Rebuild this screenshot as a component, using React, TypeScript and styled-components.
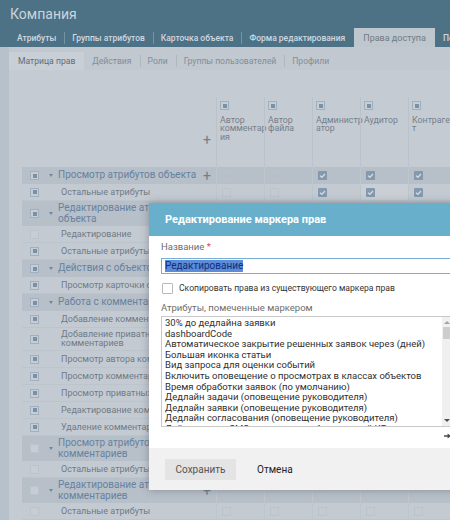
import React from 'react';
import styled, { createGlobalStyle, css } from 'styled-components';

type Box = 'on' | 'off';
type Mark = 'mixed' | 'empty';

type MatrixRow = {
  kind: 'group' | 'item';
  title: string;
  mark: Mark;
  cells: Box[];
  tall?: boolean;
  lit?: number;
};

const GlobalStyle = createGlobalStyle`
  html, body {
    margin: 0;
    padding: 0;
  }
  body {
    font-family: Roboto, 'Liberation Sans', sans-serif;
    overflow: hidden;
  }
`;

const tabs = ['Атрибуты', 'Группы атрибутов', 'Карточка объекта', 'Форма редактирования', 'Права доступа', 'Поведение'];
const subTabs = ['Матрица прав', 'Действия', 'Роли', 'Группы пользователей', 'Профили'];
const columns = ['Автор\nкомментар\nия', 'Автор\nфайла', 'Администр\nатор', 'Аудитор', 'Контраген\nт'];

const ON: Box[] = ['off', 'off', 'on', 'on', 'on'];
const MIX: Box[] = ['on', 'off', 'on', 'on', 'off'];
const OFF: Box[] = ['off', 'off', 'off', 'off', 'off'];

const rows: MatrixRow[] = [
  { kind: 'group', title: 'Просмотр атрибутов объекта', mark: 'mixed', cells: ON },
  { kind: 'item', title: 'Остальные атрибуты', mark: 'mixed', cells: ON, lit: 3 },
  { kind: 'group', title: 'Редактирование атрибутов\nобъекта', mark: 'mixed', cells: ON, tall: true },
  { kind: 'item', title: 'Редактирование', mark: 'empty', cells: OFF },
  { kind: 'item', title: 'Остальные атрибуты', mark: 'mixed', cells: ON },
  { kind: 'group', title: 'Действия с объектом', mark: 'mixed', cells: ON },
  { kind: 'item', title: 'Просмотр карточки объекта', mark: 'mixed', cells: ON },
  { kind: 'group', title: 'Работа с комментариями', mark: 'mixed', cells: MIX },
  { kind: 'item', title: 'Добавление комментариев', mark: 'mixed', cells: MIX },
  { kind: 'item', title: 'Добавление приватных\nкомментариев', mark: 'mixed', cells: MIX, tall: true },
  { kind: 'item', title: 'Просмотр автора комментария', mark: 'mixed', cells: MIX },
  { kind: 'item', title: 'Просмотр комментариев', mark: 'mixed', cells: MIX },
  { kind: 'item', title: 'Просмотр приватных комментариев', mark: 'mixed', cells: MIX },
  { kind: 'item', title: 'Редактирование комментариев', mark: 'mixed', cells: MIX },
  { kind: 'item', title: 'Удаление комментариев', mark: 'mixed', cells: MIX },
  { kind: 'group', title: 'Просмотр атрибутов\nкомментариев', mark: 'empty', cells: OFF, tall: true },
  { kind: 'item', title: 'Остальные атрибуты', mark: 'empty', cells: OFF },
  { kind: 'group', title: 'Редактирование атрибутов\nкомментариев', mark: 'empty', cells: OFF, tall: true },
  { kind: 'item', title: 'Остальные атрибуты', mark: 'empty', cells: OFF },
];

const attributes = [
  '30% до дедлайна заявки',
  'dashboardCode',
  'Автоматическое закрытие решенных заявок через (дней)',
  'Большая иконка статьи',
  'Вид запроса для оценки событий',
  'Включить оповещение о просмотрах в классах объектов',
  'Время обработки заявок (по умолчанию)',
  'Дедлайн задачи (оповещение руководителя)',
  'Дедлайн заявки (оповещение руководителя)',
  'Дедлайн согласования (оповещение руководителя)',
  'Действие для SMS-оповещения об изменений КЕ',
];

export default function App(): JSX.Element {
  return (
    <>
      <GlobalStyle />
      <Page>
        <Header>
          <Title>Компания</Title>
          <TabBar>
            {tabs.map((t, i) => (
              <Tab key={t} active={i === 4} sep={i > 0 && i < 4}>
                {t}
              </Tab>
            ))}
          </TabBar>
        </Header>

        <Body>
          <Strip />
          <Main>
            <SubBar>
              {subTabs.map((t, i) => (
                <SubTab key={t} active={i === 0} sep={i > 1}>
                  {t}
                </SubTab>
              ))}
            </SubBar>

            <Matrix>
              <HeadRow>
                <HeadName>
                  <Plus>+</Plus>
                </HeadName>
                {columns.map((c) => (
                  <HeadCell key={c}>
                    <MarkBox mark="mixed" />
                    <HeadLabel>{c}</HeadLabel>
                  </HeadCell>
                ))}
              </HeadRow>

              {rows.map((r, i) => (
                <Row key={i} kind={r.kind} tall={r.tall}>
                  <NameCell>
                    <MarkBox mark={r.mark} />
                    {r.kind === 'group' && <Caret />}
                    <Name kind={r.kind}>{r.title}</Name>
                    {r.kind === 'group' && <RowPlus>+</RowPlus>}
                  </NameCell>
                  {r.cells.map((c, j) => (
                    <Cell key={j} lit={r.lit === j}>
                      <CheckBox on={c === 'on'}>
                        {c === 'on' && (
                          <svg width="9" height="9" viewBox="0 0 9 9">
                            <path d="M2 4.6 L3.8 6.3 L7 3" fill="none" stroke="#dde3e8" strokeWidth="1.2" />
                          </svg>
                        )}
                      </CheckBox>
                    </Cell>
                  ))}
                </Row>
              ))}
            </Matrix>
          </Main>
        </Body>

        <Backdrop />

        <Dialog>
          <DialogHead>Редактирование маркера прав</DialogHead>
          <DialogBody>
            <FieldLabel>
              Название <Req>*</Req>
            </FieldLabel>
            <Input>
              <Selected>Редактирование</Selected>
            </Input>
            <CheckRow>
              <PlainBox />
              <span>Скопировать права из существующего маркера прав</span>
            </CheckRow>
            <FieldLabel gap>Атрибуты, помеченные маркером</FieldLabel>
            <ListBox>
              <ListItems>
                {attributes.map((a) => (
                  <ListItem key={a}>{a}</ListItem>
                ))}
              </ListItems>
              <ScrollBar>
                <ScrollArrow up />
                <Thumb />
                <ScrollArrow />
              </ScrollBar>
            </ListBox>
            <MoveRow>
              <svg width="7" height="6" viewBox="0 0 7 6">
                <path d="M0 2.2 H3.6 V0.4 L6.8 3 L3.6 5.6 V3.8 H0 Z" fill="#4a4a4a" />
              </svg>
            </MoveRow>
          </DialogBody>
          <DialogFoot>
            <SaveButton>Сохранить</SaveButton>
            <CancelButton>Отмена</CancelButton>
          </DialogFoot>
        </Dialog>
      </Page>
    </>
  );
}

const Page = styled.div`
  position: relative;
  width: 450px;
  height: 520px;
  overflow: hidden;
  background: #c7ced5;
`;

const Header = styled.header`
  height: 47px;
  background: #4a7185;
  display: flex;
  flex-direction: column;
  justify-content: space-between;
`;

const Title = styled.div`
  padding: 6px 0 0 10px;
  font-size: 14px;
  line-height: 16px;
  color: #cdd7de;
`;

const TabBar = styled.nav`
  display: flex;
  height: 19px;
  padding-left: 9px;
`;

const Tab = styled.div<{ active?: boolean; sep?: boolean }>`
  position: relative;
  display: flex;
  align-items: center;
  padding: 0 8px;
  font-size: 8.5px;
  font-weight: 500;
  color: #d2dbe1;
  white-space: nowrap;
  ${({ sep }) =>
    sep &&
    css`
      &::before {
        content: '';
        position: absolute;
        left: 0;
        top: 4px;
        width: 1px;
        height: 12px;
        background: #7593a4;
      }
    `}
  ${({ active }) =>
    active &&
    css`
      padding: 0 9px;
      margin-left: 1px;
      background: #c0c8d0;
      color: #6f7b85;
      font-weight: 400;
      font-size: 9px;
    `}
`;

const Body = styled.div`
  display: flex;
  height: 473px;
`;

const Strip = styled.div`
  width: 9px;
  flex-shrink: 0;
  background: #b8c3cd;
`;

const Main = styled.main`
  flex: 1;
  min-width: 0;
  overflow: hidden;
`;

const SubBar = styled.div`
  display: flex;
  padding-top: 5px;
  background: #c3cad1;
`;

const SubTab = styled.div<{ active?: boolean; sep?: boolean }>`
  position: relative;
  height: 18px;
  display: flex;
  align-items: center;
  padding: 0 8px;
  font-size: 8.6px;
  color: #818f9a;
  white-space: nowrap;
  ${({ sep }) =>
    sep &&
    css`
      &::before {
        content: '';
        position: absolute;
        left: 0;
        top: 3px;
        width: 1px;
        height: 12px;
        background: #b0b9c2;
      }
    `}
  ${({ active }) =>
    active &&
    css`
      padding: 0 9px;
      background: #cbd2d8;
      color: #5f6c76;
    `}
`;

const Matrix = styled.div`
  width: 434px;
  margin-left: 13px;
  padding-top: 27px;
`;

const HeadRow = styled.div`
  display: flex;
  height: 70px;
`;

const HeadName = styled.div`
  width: 194px;
  display: flex;
  justify-content: flex-end;
  align-items: center;
  padding: 16px 5px 0 0;
  box-sizing: border-box;
`;

const Plus = styled.span`
  font-size: 14px;
  line-height: 14px;
  color: #6f7f8d;
`;

const HeadCell = styled.div`
  width: 48px;
  box-sizing: border-box;
  border-left: 1px solid #bcc4cc;
  padding: 4px 0 0 3px;
  display: flex;
  flex-direction: column;
  align-items: flex-start;
`;

const HeadLabel = styled.div`
  margin-top: 6px;
  font-size: 8.8px;
  line-height: 8.4px;
  color: #737f8a;
  white-space: pre;
`;

const MarkBox = styled.span<{ mark: Mark }>`
  position: relative;
  display: block;
  flex-shrink: 0;
  width: 9px;
  height: 9px;
  box-sizing: border-box;
  border: 1px solid ${({ mark }) => (mark === 'mixed' ? '#a1b1c1' : '#bdc5cd')};
  background: #c9d0d7;
  ${({ mark }) =>
    mark === 'mixed' &&
    css`
      &::after {
        content: '';
        position: absolute;
        left: 1.5px;
        top: 1.5px;
        width: 4px;
        height: 4px;
        background: #7990a6;
      }
    `}
`;

const Row = styled.div<{ kind: 'group' | 'item'; tall?: boolean }>`
  display: flex;
  height: ${({ tall, kind }) => (tall ? (kind === 'group' ? '25px' : '23px') : '17px')};
  background: ${({ kind }) => (kind === 'group' ? '#b9c1c9' : '#c6cdd4')};
  border-bottom: ${({ kind }) => (kind === 'item' ? '1px solid #bfc7ce' : 'none')};
  box-sizing: border-box;
`;

const NameCell = styled.div`
  width: 194px;
  flex-shrink: 0;
  display: flex;
  align-items: center;
  padding: 0 5px 0 8px;
  box-sizing: border-box;
`;

const Caret = styled.span`
  width: 0;
  height: 0;
  margin-left: 10px;
  border-left: 2.5px solid transparent;
  border-right: 2.5px solid transparent;
  border-top: 3px solid #6e89a0;
  flex-shrink: 0;
`;

const Name = styled.span<{ kind: 'group' | 'item' }>`
  flex: 0 1 auto;
  min-width: 0;
  white-space: pre;
  overflow: hidden;
  ${({ kind }) =>
    kind === 'group'
      ? css`
          margin-left: 5px;
          font-size: 10px;
          line-height: 10.5px;
          color: #6582a0;
        `
      : css`
          margin-left: 22px;
          font-size: 9px;
          line-height: 9px;
          color: #6e7a84;
        `}
`;

const RowPlus = styled.span`
  margin-left: auto;
  padding-left: 4px;
  font-size: 14px;
  line-height: 12px;
  color: #6f7f8d;
`;

const Cell = styled.div<{ lit?: boolean }>`
  width: 48px;
  flex-shrink: 0;
  box-sizing: border-box;
  border-left: 1px solid #bfc7cf;
  display: flex;
  align-items: center;
  padding-left: 5px;
  ${({ lit }) => lit && 'background: #ccd2d8;'}
`;

const CheckBox = styled.span<{ on?: boolean }>`
  width: 9px;
  height: 9px;
  box-sizing: border-box;
  border-radius: 1px;
  display: flex;
  ${({ on }) => (on ? 'background: #8299ae;' : 'border: 1px solid #bcc4cc;')}
  svg {
    display: block;
  }
`;

const Backdrop = styled.div`
  position: absolute;
  inset: 0;
  background: rgba(150, 160, 170, 0.04);
`;

const Dialog = styled.section`
  position: absolute;
  left: 149px;
  top: 203px;
  width: 316px;
  background: #fff;
  box-shadow: 0 0 8px rgba(40, 50, 60, 0.35);
`;

const DialogHead = styled.div`
  height: 33px;
  display: flex;
  align-items: center;
  padding-left: 16px;
  background: #67afcb;
  color: #fff;
  font-size: 11px;
  font-weight: 700;
`;

const DialogBody = styled.div`
  padding: 6px 12px 3px 12px;
`;

const FieldLabel = styled.div<{ gap?: boolean }>`
  font-size: 9.5px;
  line-height: 10px;
  color: #6d6d6d;
  margin-top: ${({ gap }) => (gap ? '9px' : '0')};
`;

const Req = styled.span`
  color: #e0483f;
`;

const Input = styled.div`
  margin-top: 6px;
  height: 16px;
  box-sizing: border-box;
  border: 1px solid #7aaed6;
  display: flex;
  align-items: center;
  padding-left: 3px;
  font-size: 10px;
`;

const Selected = styled.span`
  background: #5b8bd9;
  color: #122e78;
  line-height: 12px;
`;

const CheckRow = styled.label`
  margin-top: 8px;
  height: 12px;
  display: flex;
  align-items: center;
  gap: 6px;
  font-size: 8.6px;
  color: #333;
`;

const PlainBox = styled.span`
  width: 11px;
  height: 11px;
  box-sizing: border-box;
  border: 1px solid #b9b9b9;
  border-radius: 1px;
  margin-left: 1px;
`;

const ListBox = styled.div`
  margin-top: 3px;
  height: 111px;
  box-sizing: border-box;
  border: 1px solid #c9c9c9;
  display: flex;
  overflow: hidden;
`;

const ListItems = styled.div`
  flex: 1;
  padding: 1px 0 0 3px;
  overflow: hidden;
`;

const ListItem = styled.div`
  font-size: 9.5px;
  line-height: 10.6px;
  color: #2f2f2f;
  white-space: nowrap;
`;

const ScrollBar = styled.div`
  width: 10px;
  background: #f0f0f0;
  display: flex;
  flex-direction: column;
  align-items: center;
`;

const ScrollArrow = styled.span<{ up?: boolean }>`
  width: 0;
  height: 0;
  margin: ${({ up }) => (up ? '4px 0 3px' : 'auto 0 4px')};
  border-left: 3px solid transparent;
  border-right: 3px solid transparent;
  ${({ up }) => (up ? 'border-bottom: 3px solid #a3a3a3;' : 'border-top: 3px solid #505050;')}
`;

const Thumb = styled.span`
  width: 8px;
  height: 12px;
  background: #cdcdcd;
`;

const MoveRow = styled.div`
  height: 18px;
  display: flex;
  align-items: center;
  justify-content: flex-end;
  padding-right: 2px;
`;

const DialogFoot = styled.div`
  height: 42px;
  background: #f1f1f1;
  display: flex;
  align-items: center;
  padding-left: 16px;
  gap: 21px;
`;

const SaveButton = styled.button`
  width: 71px;
  height: 21px;
  border: none;
  background: #e4e4e4;
  font-family: inherit;
  font-size: 10px;
  color: #555;
  padding: 0;
`;

const CancelButton = styled.button`
  border: none;
  background: none;
  padding: 0;
  font-family: inherit;
  font-size: 10px;
  color: #222;
`;
